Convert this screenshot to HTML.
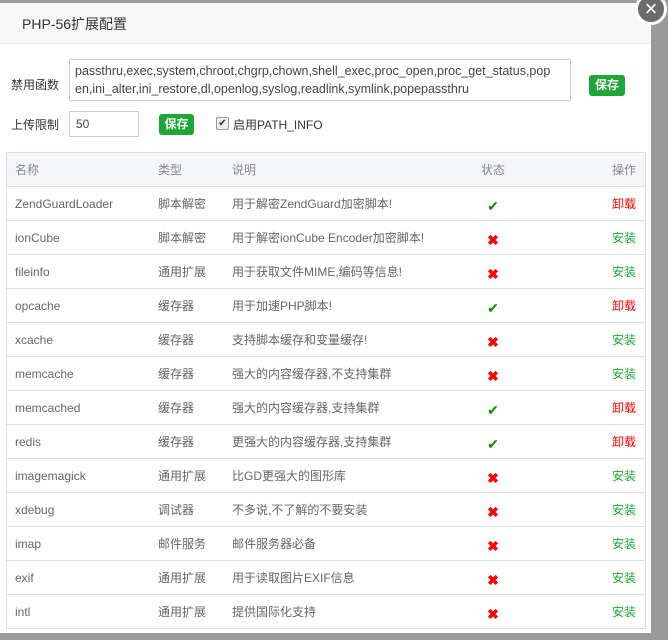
<!DOCTYPE html><html><head><meta charset="utf-8"><style>
body{margin:0;width:668px;height:640px;background:#9a9a9a;position:relative;overflow:hidden;font-family:"Liberation Sans","Noto Sans CJK SC",sans-serif;font-size:12px;color:#555}
.dlg{position:absolute;left:0;top:3px;width:651px;height:630px;background:#fff}
.hd{height:40px;background:#f8f8f8;border-bottom:1px solid #eee;font-size:14px;color:#333;line-height:42px;padding-left:22px}
.close{position:absolute;left:635px;top:-10px;width:26px;height:26px;border-radius:50%;background:#6b6b6b;border:3px solid #fff;color:#fff;text-align:center;line-height:25px;font-size:22px}
.ab{position:absolute}
.btn{background:#20a53a;color:#fff;font-weight:bold;font-size:12px;border-radius:3px;text-align:center;line-height:21px}
table{position:absolute;left:6px;top:149px;width:640px;border-collapse:collapse;border:1px solid #ddd}
td,th{height:33px;border-bottom:1px solid #ddd;padding:0;text-align:left;font-weight:normal;font-size:12px;color:#666}
th{background:#f5f6fa;color:#888;height:33px}
.r{text-align:right;padding-right:9px}
.ok,.no{font-size:14px;text-align:center}
.ok span{color:#118800;position:relative;top:3px}.no span{color:#f00;font-weight:bold;position:relative;top:3px}
.red{color:#f00}.grn{color:#20a53a}
</style></head><body>
<div class="dlg">
<div class="hd">PHP-56扩展配置</div>
<div class="close">×</div>
<div class="ab" style="left:11px;top:73px;color:#333">禁用函数</div>
<div class="ab" style="left:69px;top:56px;width:490px;height:36px;border:1px solid #ccc;padding:2px 5px;color:#444;font-size:12.5px;line-height:18px;white-space:nowrap;overflow:hidden">passthru,exec,system,chroot,chgrp,chown,shell_exec,proc_open,proc_get_status,pop<br>en,ini_alter,ini_restore,dl,openlog,syslog,readlink,symlink,popepassthru</div>
<div class="ab btn" style="left:589px;top:72px;width:36px">保存</div>
<div class="ab" style="left:11px;top:113px;color:#333">上传限制</div>
<div class="ab" style="left:69px;top:108px;width:62px;height:24px;border:1px solid #ccc;padding-left:6px;line-height:24px;color:#444">50</div>
<div class="ab btn" style="left:159px;top:111px;width:35px">保存</div>
<div class="ab" style="left:216px;top:114px;width:11px;height:11px;border:1px solid #999;border-radius:2px;background:#eee;font-size:10px;line-height:11px;text-align:center;color:#333">✔</div>
<div class="ab" style="left:233px;top:113px;color:#333">启用PATH_INFO</div>
<table>
<tr><th style="width:143px;padding-left:8px">名称</th><th style="width:74px">类型</th><th style="width:230px">说明</th><th style="width:62px;text-align:center">状态</th><th class="r">操作</th></tr>
<tr><td style="padding-left:8px">ZendGuardLoader</td><td>脚本解密</td><td>用于解密ZendGuard加密脚本!</td><td class="ok"><span>✔</span></td><td class="r red">卸载</td></tr>
<tr><td style="padding-left:8px">ionCube</td><td>脚本解密</td><td>用于解密ionCube Encoder加密脚本!</td><td class="no"><span>✖</span></td><td class="r grn">安装</td></tr>
<tr><td style="padding-left:8px">fileinfo</td><td>通用扩展</td><td>用于获取文件MIME,编码等信息!</td><td class="no"><span>✖</span></td><td class="r grn">安装</td></tr>
<tr><td style="padding-left:8px">opcache</td><td>缓存器</td><td>用于加速PHP脚本!</td><td class="ok"><span>✔</span></td><td class="r red">卸载</td></tr>
<tr><td style="padding-left:8px">xcache</td><td>缓存器</td><td>支持脚本缓存和变量缓存!</td><td class="no"><span>✖</span></td><td class="r grn">安装</td></tr>
<tr><td style="padding-left:8px">memcache</td><td>缓存器</td><td>强大的内容缓存器,不支持集群</td><td class="no"><span>✖</span></td><td class="r grn">安装</td></tr>
<tr><td style="padding-left:8px">memcached</td><td>缓存器</td><td>强大的内容缓存器,支持集群</td><td class="ok"><span>✔</span></td><td class="r red">卸载</td></tr>
<tr><td style="padding-left:8px">redis</td><td>缓存器</td><td>更强大的内容缓存器,支持集群</td><td class="ok"><span>✔</span></td><td class="r red">卸载</td></tr>
<tr><td style="padding-left:8px">imagemagick</td><td>通用扩展</td><td>比GD更强大的图形库</td><td class="no"><span>✖</span></td><td class="r grn">安装</td></tr>
<tr><td style="padding-left:8px">xdebug</td><td>调试器</td><td>不多说,不了解的不要安装</td><td class="no"><span>✖</span></td><td class="r grn">安装</td></tr>
<tr><td style="padding-left:8px">imap</td><td>邮件服务</td><td>邮件服务器必备</td><td class="no"><span>✖</span></td><td class="r grn">安装</td></tr>
<tr><td style="padding-left:8px">exif</td><td>通用扩展</td><td>用于读取图片EXIF信息</td><td class="no"><span>✖</span></td><td class="r grn">安装</td></tr>
<tr><td style="padding-left:8px">intl</td><td>通用扩展</td><td>提供国际化支持</td><td class="no"><span>✖</span></td><td class="r grn">安装</td></tr>
</table>
</div>
</body></html>
